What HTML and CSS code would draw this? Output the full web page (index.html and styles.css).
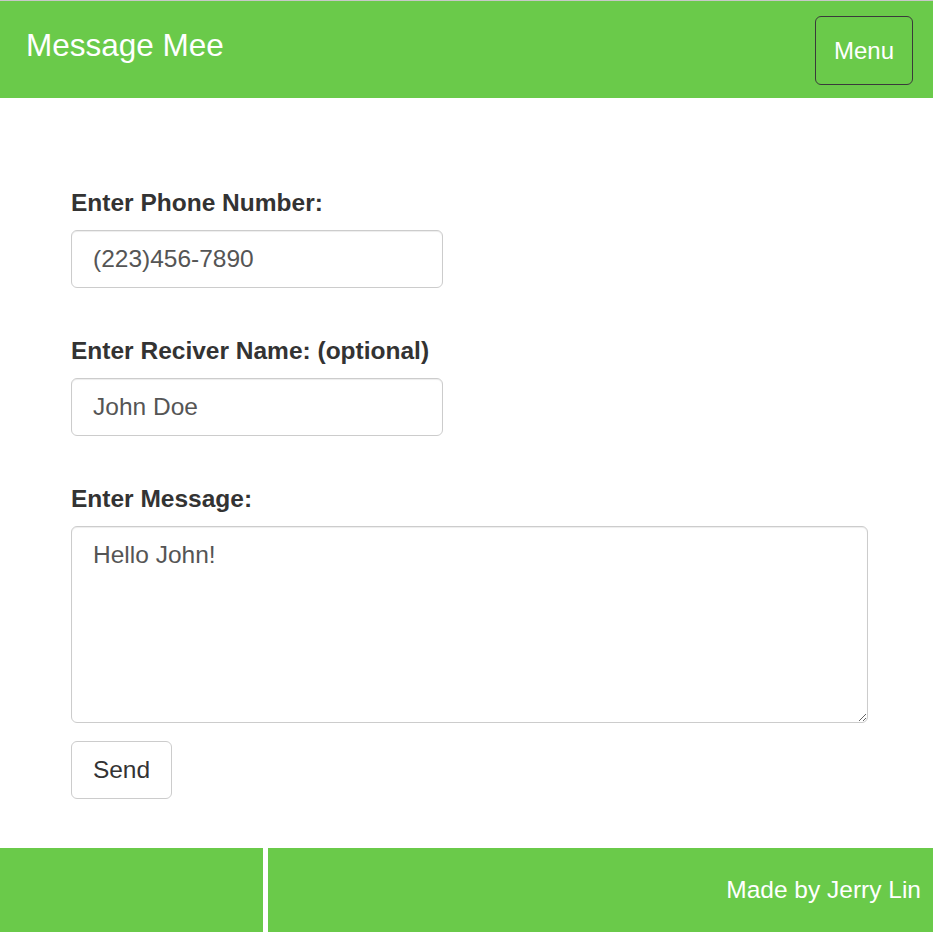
FILE: index.html
```html
<!DOCTYPE html>
<html lang="en">
<head>
<meta charset="utf-8">
<title>Message Mee</title>
<link rel="stylesheet" href="styles.css">
</head>
<body>
<header class="topbar">
  <div class="brand">Message Mee</div>
  <button class="menu-btn" type="button">Menu</button>
</header>
<main class="content">
  <form class="msg-form">
    <div class="field">
      <label class="field-label" for="phone">Enter Phone Number:</label>
      <input class="text-input" id="phone" type="text" value="(223)456-7890">
    </div>
    <div class="field">
      <label class="field-label" for="name">Enter Reciver Name: (optional)</label>
      <input class="text-input" id="name" type="text" value="John Doe">
    </div>
    <div class="field field-last">
      <label class="field-label" for="msg">Enter Message:</label>
      <textarea class="text-area" id="msg">Hello John!</textarea>
    </div>
    <button class="send-btn" type="button">Send</button>
  </form>
</main>
<footer class="footer">
  <div class="footer-left"></div>
  <div class="footer-right">Made by Jerry Lin</div>
</footer>
</body>
</html>
```

FILE: styles.css
```css
html, body {
  margin: 0;
  padding: 0;
  background: #ffffff;
}
body {
  font-family: "Liberation Sans", Arial, sans-serif;
  color: #333333;
  font-size: 24.5px;
  line-height: 34px;
}
.topbar {
  box-sizing: border-box;
  height: 98px;
  border-top: 1px solid #c8c8c8;
  background: #6aca4a;
  display: flex;
  justify-content: space-between;
  align-items: flex-start;
  padding: 0 20px 0 26px;
}
.brand {
  color: #ffffff;
  font-size: 31.5px;
  line-height: 34px;
  margin-top: 27px;
}
.menu-btn {
  box-sizing: border-box;
  margin-top: 15px;
  width: 98px;
  height: 69px;
  background: transparent;
  border: 1px solid #3a3a3a;
  border-radius: 6px;
  color: #ffffff;
  font-family: "Liberation Sans", Arial, sans-serif;
  font-size: 24px;
  padding: 0;
}
.content {
  padding: 88px 0 0 71px;
}
.msg-form {
  display: flex;
  flex-direction: column;
  align-items: flex-start;
}
.field {
  display: flex;
  flex-direction: column;
  align-items: flex-start;
  margin-bottom: 46px;
}
.field-last {
  margin-bottom: 0;
}
.field-label {
  font-weight: bold;
  margin-bottom: 10px;
  color: #333333;
}
.text-input {
  box-sizing: border-box;
  width: 372px;
  height: 58px;
  padding: 0 21px;
  border: 1px solid #cccccc;
  border-radius: 6px;
  box-shadow: inset 0 1px 1px rgba(0, 0, 0, 0.075);
  font-family: "Liberation Sans", Arial, sans-serif;
  font-size: 24.5px;
  color: #555555;
  background: #ffffff;
  outline: none;
}
.text-area {
  box-sizing: border-box;
  width: 797px;
  height: 197px;
  padding: 11px 21px;
  border: 1px solid #cccccc;
  border-radius: 6px;
  box-shadow: inset 0 1px 1px rgba(0, 0, 0, 0.075);
  font-family: "Liberation Sans", Arial, sans-serif;
  font-size: 24.5px;
  line-height: 34px;
  color: #555555;
  background: #ffffff;
  resize: vertical;
  outline: none;
}
.send-btn {
  box-sizing: border-box;
  margin-top: 18px;
  margin-bottom: 49px;
  width: 101px;
  height: 58px;
  padding: 0;
  border: 1px solid #cccccc;
  border-radius: 6px;
  background: #ffffff;
  color: #333333;
  font-family: "Liberation Sans", Arial, sans-serif;
  font-size: 24.5px;
}
.footer {
  display: flex;
  gap: 5px;
  height: 84px;
}
.footer-left {
  width: 263px;
  background: #6aca4a;
}
.footer-right {
  flex: 1;
  background: #6aca4a;
  color: #ffffff;
  display: flex;
  align-items: center;
  justify-content: flex-end;
  padding-right: 12px;
}
```
